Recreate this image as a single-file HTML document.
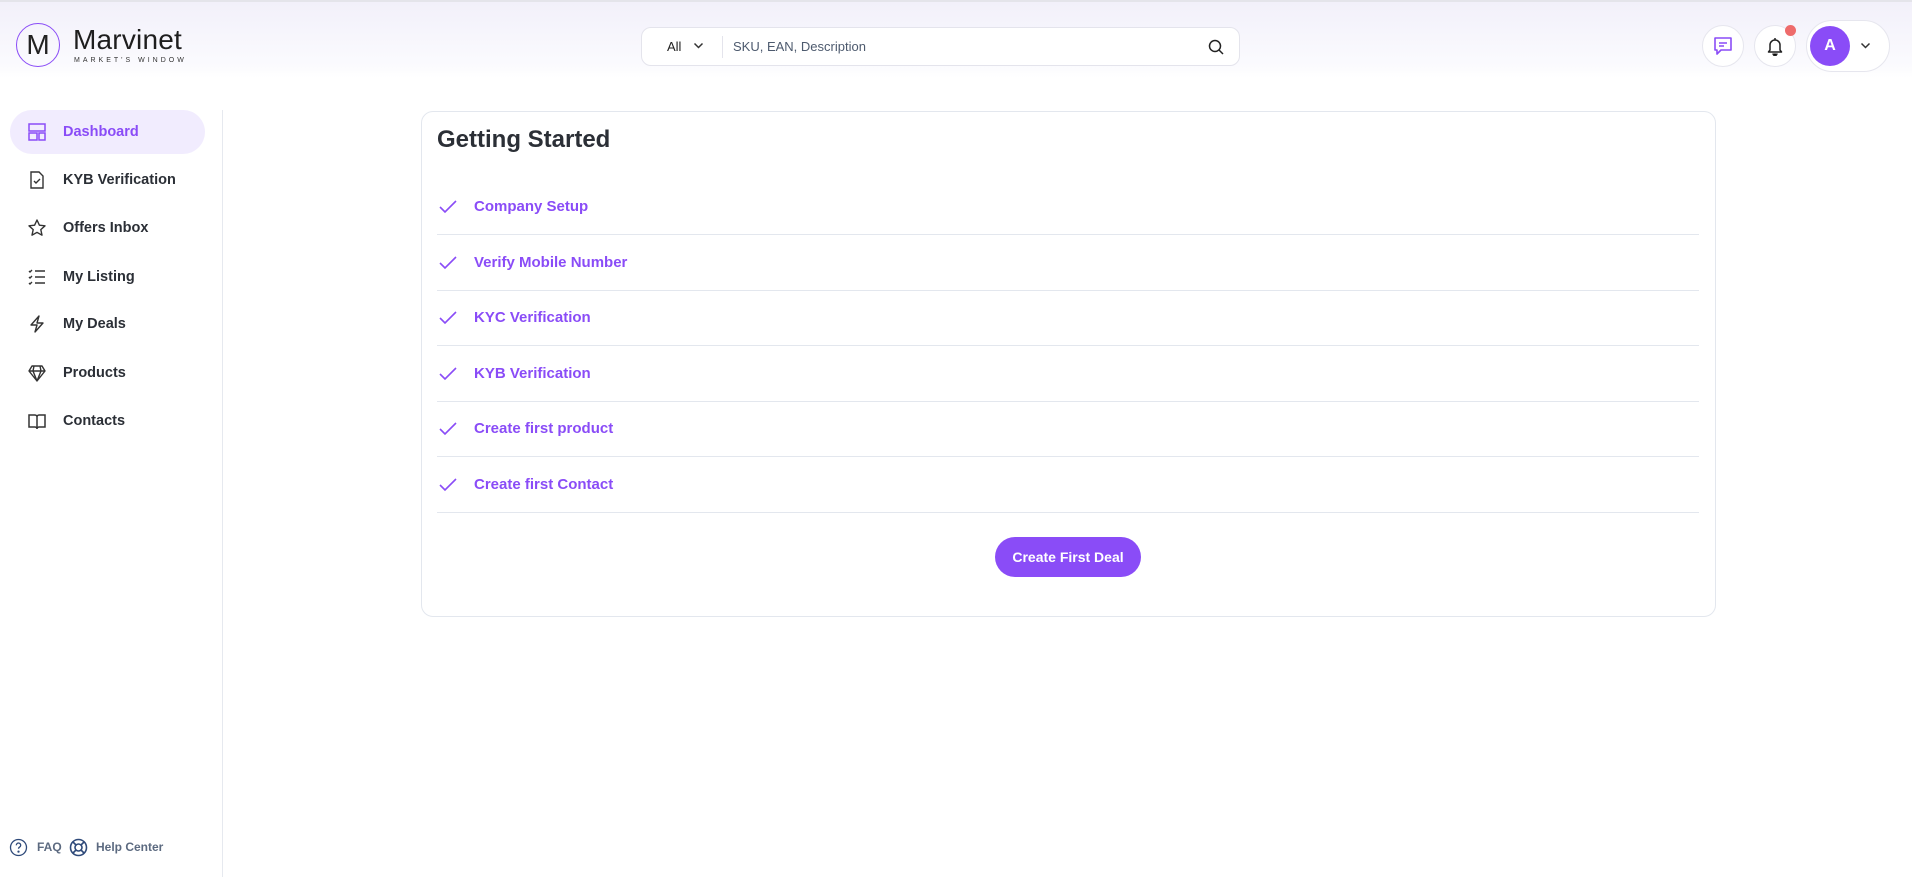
<!DOCTYPE html>
<html><head><meta charset="utf-8">
<style>
*{box-sizing:border-box;margin:0;padding:0}
body{width:1912px;height:877px;overflow:hidden;background:#fff;font-family:"Liberation Sans",sans-serif;position:relative;color:#2b2f36}
.hdr{position:absolute;left:0;top:0;width:1912px;height:78px;background:linear-gradient(#f2f0fa,#fbfbfe 85%,#fff);border-top:2px solid #e4e4ea}
.abs{position:absolute}
.nav{position:absolute;left:10px;width:195px;height:44px;border-radius:22px;display:flex;align-items:center;font-size:14.5px;font-weight:bold;color:#2b2f36}
.nav svg{position:absolute;left:17px}
.nav span{position:absolute;left:53px}
.item{position:absolute;left:437px;width:1262px;height:56px;display:flex;align-items:center;border-bottom:1px solid #e3e7ee;color:#8a4cf7;font-weight:bold;font-size:15px}
.item svg{position:absolute;left:2px}
.item span{position:absolute;left:37px}
.circ{position:absolute;border-radius:50%;background:#fff;border:1px solid #e6e6ee}
</style></head><body>
<div class="hdr"></div>
<div class="abs" style="left:16px;top:23px;width:44px;height:44px;border-radius:50%;border:1.5px solid #8a4cf7;display:flex;align-items:center;justify-content:center;font-size:28px;color:#222;">M</div>
<div class="abs" style="left:73px;top:24px;font-size:28px;color:#1e1e1e;letter-spacing:0.2px">Marvinet</div>
<div class="abs" style="left:74px;top:57px;font-size:7px;letter-spacing:3px;color:#333">MARKET'S WINDOW</div>
<div class="abs" style="left:641px;top:27px;width:599px;height:39px;border:1px solid #e4e4ec;border-radius:10px;background:#fff">
 <span class="abs" style="left:25px;top:11px;font-size:13px;color:#222">All</span>
 <svg class="abs" style="left:51px;top:14px" width="11" height="8" viewBox="0 0 11 8"><path d="M1.5 1.5l4 4 4-4" fill="none" stroke="#333" stroke-width="1.5"/></svg>
 <div class="abs" style="left:80px;top:8px;width:1px;height:22px;background:#e4e4ec"></div>
 <span class="abs" style="left:91px;top:11px;font-size:13px;color:#4d5a6e">SKU, EAN, Description</span>
 <svg class="abs" style="left:566px;top:11px" width="17" height="17" viewBox="0 0 17 17"><circle cx="7" cy="7" r="5.5" fill="none" stroke="#222" stroke-width="1.5"/><path d="M11 11l4 4" stroke="#222" stroke-width="1.5"/></svg>
</div>
<div class="circ" style="left:1702px;top:25px;width:42px;height:42px"></div>
<svg class="abs" style="left:1713px;top:36px" width="20" height="20" viewBox="0 0 20 20"><path d="M2 2h16v12H8l-4 4v-4H2z" fill="none" stroke="#8a4cf7" stroke-width="1.6" stroke-linejoin="round"/><path d="M6 7h8M6 10h5" stroke="#8a4cf7" stroke-width="1.6"/></svg>
<div class="circ" style="left:1754px;top:25px;width:42px;height:42px"></div>
<svg class="abs" style="left:1765px;top:36px" width="20" height="20" viewBox="0 0 20 20"><path d="M5 14V9a5 5 0 0110 0v5l1.5 2h-13z" fill="none" stroke="#222" stroke-width="1.5" stroke-linejoin="round"/><path d="M8 17.5a2 2 0 004 0M10 2v2" stroke="#222" stroke-width="1.5"/></svg>
<div class="abs" style="left:1785px;top:25px;width:11px;height:11px;border-radius:50%;background:#ee6b6b"></div>
<div class="abs" style="left:1806px;top:20px;width:84px;height:52px;border-radius:26px;background:#fff;border:1px solid #e6e6ee"></div>
<div class="abs" style="left:1810px;top:26px;width:40px;height:40px;border-radius:50%;background:#8a4cf7;color:#fff;font-weight:bold;font-size:16px;display:flex;align-items:center;justify-content:center">A</div>
<svg class="abs" style="left:1860px;top:42px" width="11" height="8" viewBox="0 0 11 8"><path d="M1.5 1.5l4 4 4-4" fill="none" stroke="#333" stroke-width="1.5"/></svg>
<div class="abs" style="left:222px;top:110px;width:1px;height:767px;background:#e6e9ef"></div>
<div class="nav" style="top:110px;background:#f1ecfe;color:#8a4cf7"><svg width="20" height="20" viewBox="0 0 20 20" fill="none" stroke="#8a4cf7" stroke-width="1.5"><rect x="2" y="2" width="16" height="7"/><rect x="2" y="11" width="8" height="7"/><rect x="12" y="11" width="6" height="7"/></svg><span>Dashboard</span></div>
<div class="nav" style="top:158px"><svg width="20" height="20" viewBox="0 0 20 20" fill="none" stroke="#333" stroke-width="1.4"><path d="M4 2h8l4 4v12H4z"/><path d="M7 11l2 2 4-4"/></svg><span>KYB Verification</span></div>
<div class="nav" style="top:206px"><svg width="20" height="20" viewBox="0 0 20 20" fill="none" stroke="#333" stroke-width="1.4" stroke-linejoin="round"><path d="M10 2l2.4 5.2 5.6.6-4.2 3.8 1.2 5.6L10 14.4 5 17.2l1.2-5.6L2 7.8l5.6-.6z"/></svg><span>Offers Inbox</span></div>
<div class="nav" style="top:255px"><svg width="20" height="20" viewBox="0 0 20 20" fill="none" stroke="#333" stroke-width="1.4"><path d="M8 4h10M8 10h10M8 16h10M2 4l1 1 2-2M2 10l1 1 2-2M2 16l1 1 2-2"/></svg><span>My Listing</span></div>
<div class="nav" style="top:302px"><svg width="20" height="20" viewBox="0 0 20 20" fill="none" stroke="#333" stroke-width="1.4" stroke-linejoin="round"><path d="M12 2L4 11h6l-2 7 8-9h-6z"/></svg><span>My Deals</span></div>
<div class="nav" style="top:351px"><svg width="20" height="20" viewBox="0 0 20 20" fill="none" stroke="#333" stroke-width="1.4" stroke-linejoin="round"><path d="M5 3h10l3 5-8 10L2 8zM2 8h16M7 3l-1 5 4 10 4-10-1-5"/></svg><span>Products</span></div>
<div class="nav" style="top:399px"><svg width="20" height="20" viewBox="0 0 20 20" fill="none" stroke="#333" stroke-width="1.5"><path d="M2 4h6a2 2 0 012 2v12a2 2 0 00-2-2H2zM18 4h-6a2 2 0 00-2 2v12a2 2 0 012-2h6z"/></svg><span>Contacts</span></div>
<svg class="abs" style="left:9px;top:838px" width="19" height="19" viewBox="0 0 19 19" fill="none" stroke="#2f4a7a" stroke-width="1.3"><circle cx="9.5" cy="9.5" r="8"/><path d="M7.3 7.3a2.2 2.2 0 114 1.2c-.8.6-1.8 1-1.8 2.2"/><circle cx="9.5" cy="13.6" r=".5" fill="#2f4a7a"/></svg>
<span class="abs" style="left:37px;top:840px;font-size:12px;font-weight:bold;color:#5c6a80">FAQ</span>
<svg class="abs" style="left:69px;top:838px" width="19" height="19" viewBox="0 0 19 19" fill="none" stroke="#2f4a7a" stroke-width="1.6"><circle cx="9.5" cy="9.5" r="8"/><circle cx="9.5" cy="9.5" r="3.5"/><path d="M4 4l3 3M15 4l-3 3M4 15l3-3M15 15l-3-3"/></svg>
<span class="abs" style="left:96px;top:840px;font-size:12px;font-weight:bold;color:#5c6a80">Help Center</span>
<div class="abs" style="left:421px;top:111px;width:1295px;height:506px;border:1px solid #e3e7ee;border-radius:12px"></div>
<div class="abs" style="left:437px;top:126px;font-size:24px;font-weight:bold;color:#2b2f36">Getting Started</div>
<div class="item" style="top:179px"><svg width="18" height="14" viewBox="0 0 18 14"><path d="M1 7l5 5L17 1" fill="none" stroke="#8a4cf7" stroke-width="1.6"/></svg><span>Company Setup</span></div>
<div class="item" style="top:235px"><svg width="18" height="14" viewBox="0 0 18 14"><path d="M1 7l5 5L17 1" fill="none" stroke="#8a4cf7" stroke-width="1.6"/></svg><span>Verify Mobile Number</span></div>
<div class="item" style="top:290px"><svg width="18" height="14" viewBox="0 0 18 14"><path d="M1 7l5 5L17 1" fill="none" stroke="#8a4cf7" stroke-width="1.6"/></svg><span>KYC Verification</span></div>
<div class="item" style="top:346px"><svg width="18" height="14" viewBox="0 0 18 14"><path d="M1 7l5 5L17 1" fill="none" stroke="#8a4cf7" stroke-width="1.6"/></svg><span>KYB Verification</span></div>
<div class="item" style="top:401px"><svg width="18" height="14" viewBox="0 0 18 14"><path d="M1 7l5 5L17 1" fill="none" stroke="#8a4cf7" stroke-width="1.6"/></svg><span>Create first product</span></div>
<div class="item" style="top:457px"><svg width="18" height="14" viewBox="0 0 18 14"><path d="M1 7l5 5L17 1" fill="none" stroke="#8a4cf7" stroke-width="1.6"/></svg><span>Create first Contact</span></div>
<div class="abs" style="left:995px;top:537px;width:146px;height:40px;border-radius:20px;background:#8a4cf7;color:#fff;font-size:14px;font-weight:bold;display:flex;align-items:center;justify-content:center">Create First Deal</div>
</body></html>
